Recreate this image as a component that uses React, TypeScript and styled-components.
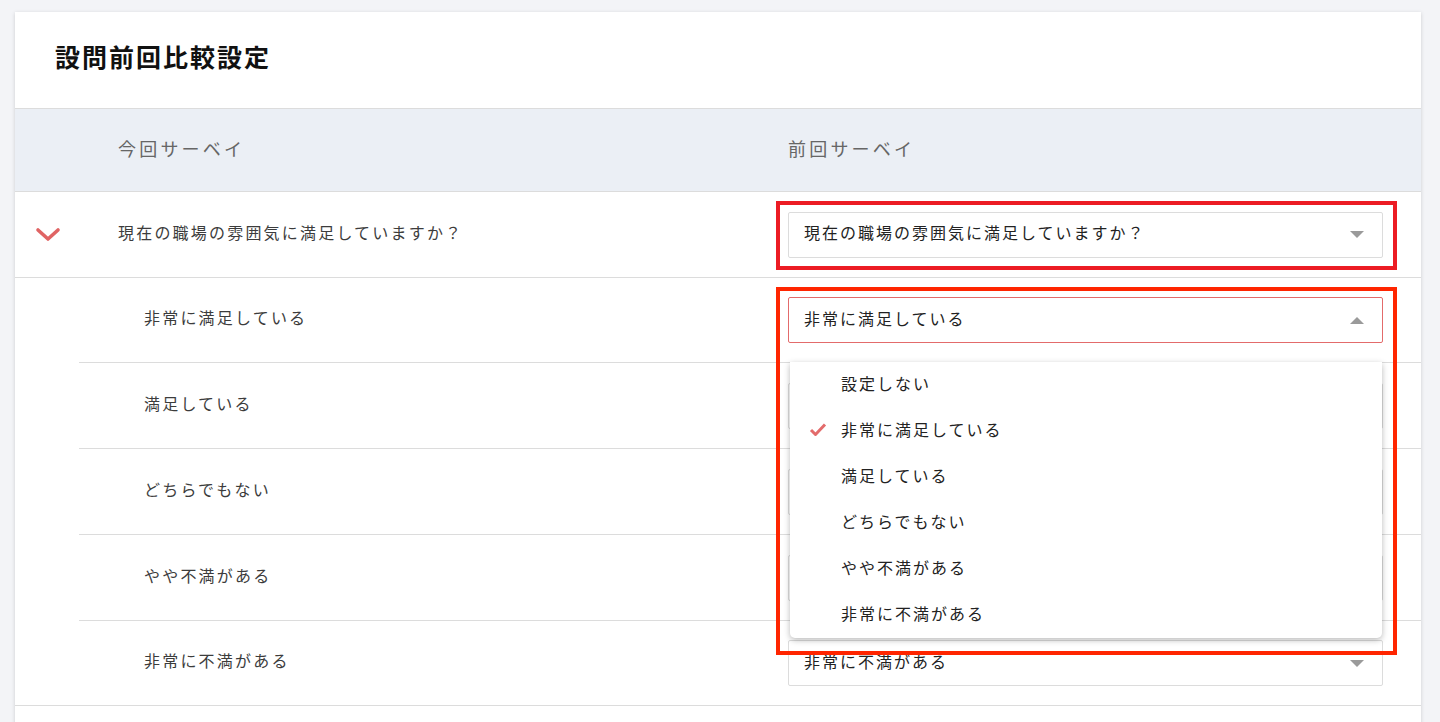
import styled, { createGlobalStyle } from 'styled-components';

const GlobalStyle = createGlobalStyle`
  html, body {
    margin: 0;
    padding: 0;
    background: #f3f4f7;
    font-family: "Noto Sans CJK JP", "Noto Sans", sans-serif;
  }
  * {
    box-sizing: border-box;
  }
`;

const Page = styled.div`
  height: 722px;
  overflow: hidden;
  padding: 12px 19px 0 15px;
`;

const Card = styled.div`
  background: #fff;
  min-height: 740px;
  box-shadow: 0 1px 4px rgba(0, 0, 0, 0.16);
`;

const TitleBar = styled.h1`
  margin: 0;
  height: 97px;
  display: flex;
  align-items: center;
  padding: 0 0 8px 40px;
  font-size: 25px;
  font-weight: 700;
  letter-spacing: 2px;
  color: #111;
  border-bottom: 1px solid #dcdcdc;
`;

const HeaderRow = styled.div`
  display: grid;
  grid-template-columns: 103px 670px 1fr;
  align-items: center;
  height: 83px;
  padding-bottom: 5px;
  background: #ebeff5;
  border-bottom: 1px solid #dcdcdc;
  font-size: 18px;
  letter-spacing: 3.2px;
  color: #666;
`;

const QuestionRow = styled.div`
  display: grid;
  grid-template-columns: 103px 670px 1fr;
  align-items: center;
  height: 86px;
  border-bottom: 1px solid #dcdcdc;
`;

const ToggleIcon = styled.div`
  display: flex;
  align-items: center;
  padding-left: 20px;
`;

const RowLabel = styled.div`
  padding-bottom: 6px;
  font-size: 16px;
  letter-spacing: 2.2px;
  color: #3c3c3c;
`;

const ChoiceList = styled.div`
  border-bottom: 1px solid #dcdcdc;
`;

const ChoiceRow = styled.div`
  display: grid;
  grid-template-columns: 65px 644px 1fr;
  align-items: center;
  height: 86px;
  margin-left: 64px;
  &:not(:last-child) {
    border-bottom: 1px solid #dcdcdc;
  }
  &:first-child {
    height: 85px;
  }
  &:last-child {
    height: 84px;
  }
`;

const SelectCell = styled.div`
  padding-right: 38px;
`;

const SelectAnchor = styled.div`
  position: relative;
`;

const SelectBox = styled.div<{ open?: boolean }>`
  height: 46px;
  display: flex;
  align-items: center;
  justify-content: space-between;
  padding: 0 18px 0 15px;
  background: #fff;
  border: 1px solid ${({ open }) => (open ? '#e36b6b' : '#dcdcdc')};
  border-radius: 2px;
  font-size: 16px;
  letter-spacing: 2px;
  color: #222;
`;

const SelectText = styled.span`
  padding-bottom: 5px;
`;

const Caret = styled.span<{ up?: boolean }>`
  width: 0;
  height: 0;
  border-left: 7px solid transparent;
  border-right: 7px solid transparent;
  ${({ up }) => (up ? 'border-bottom: 7px solid #9a9a9a;' : 'border-top: 7px solid #9a9a9a;')}
`;

const Menu = styled.ul`
  position: absolute;
  top: 65px;
  left: 2px;
  right: 1px;
  margin: 0;
  padding: 0;
  list-style: none;
  background: #fff;
  border-radius: 0 0 5px 5px;
  box-shadow: 0 2px 6px rgba(0, 0, 0, 0.28);
  z-index: 5;
`;

const MenuItem = styled.li`
  position: relative;
  height: 46px;
  display: flex;
  align-items: center;
  padding: 0 0 4px 51px;
  font-size: 16px;
  letter-spacing: 2px;
  color: #222;
`;

const CheckMark = styled.svg`
  position: absolute;
  left: 19px;
  top: 14px;
`;

const Annotation = styled.div<{ tone: string; boxHeight?: number }>`
  position: absolute;
  top: ${({ boxHeight }) => (boxHeight ? -10 : -11)}px;
  left: -12px;
  right: -14px;
  height: ${({ boxHeight }) => boxHeight ?? 69}px;
  border: 4px solid ${({ tone }) => tone};
  pointer-events: none;
  z-index: 6;
`;

const choices = ['非常に満足している', '満足している', 'どちらでもない', 'やや不満がある', '非常に不満がある'];
const options = ['設定しない', ...choices];

const Chevron = () => (
  <svg width="26" height="16" viewBox="0 0 26 16">
    <polyline points="3,3 13,12 23,3" fill="none" stroke="#e06464" strokeWidth="3.6" strokeLinecap="round" strokeLinejoin="round" />
  </svg>
);

const question = '現在の職場の雰囲気に満足していますか？';

export default function App() {
  return (
    <Page>
      <GlobalStyle />
      <Card>
        <TitleBar>設問前回比較設定</TitleBar>
        <HeaderRow>
          <div />
          <div>今回サーベイ</div>
          <div>前回サーベイ</div>
        </HeaderRow>
        <QuestionRow>
          <ToggleIcon>
            <Chevron />
          </ToggleIcon>
          <RowLabel>{question}</RowLabel>
          <SelectCell>
            <SelectAnchor>
              <SelectBox>
                <SelectText>{question}</SelectText>
                <Caret />
              </SelectBox>
              <Annotation tone="#ec1c24" />
            </SelectAnchor>
          </SelectCell>
        </QuestionRow>
        <ChoiceList>
          {choices.map((choice, index) => {
            const open = index === 0;
            return (
              <ChoiceRow key={choice}>
                <div />
                <RowLabel>{choice}</RowLabel>
                <SelectCell>
                  <SelectAnchor>
                    <SelectBox open={open}>
                      <SelectText>{choice}</SelectText>
                      <Caret up={open} />
                    </SelectBox>
                    {open && (
                      <>
                        <Menu>
                          {options.map((option) => (
                            <MenuItem key={option}>
                              {option === choice && (
                                <CheckMark width="18" height="15" viewBox="0 0 18 15">
                                  <polyline
                                    points="2,8 6.5,12.5 16,2.5"
                                    fill="none"
                                    stroke="#e36c6c"
                                    strokeWidth="3"
                                    strokeLinejoin="round"
                                  />
                                </CheckMark>
                              )}
                              {option}
                            </MenuItem>
                          ))}
                        </Menu>
                        <Annotation tone="#ff2500" boxHeight={368} />
                      </>
                    )}
                  </SelectAnchor>
                </SelectCell>
              </ChoiceRow>
            );
          })}
        </ChoiceList>
      </Card>
    </Page>
  );
}
